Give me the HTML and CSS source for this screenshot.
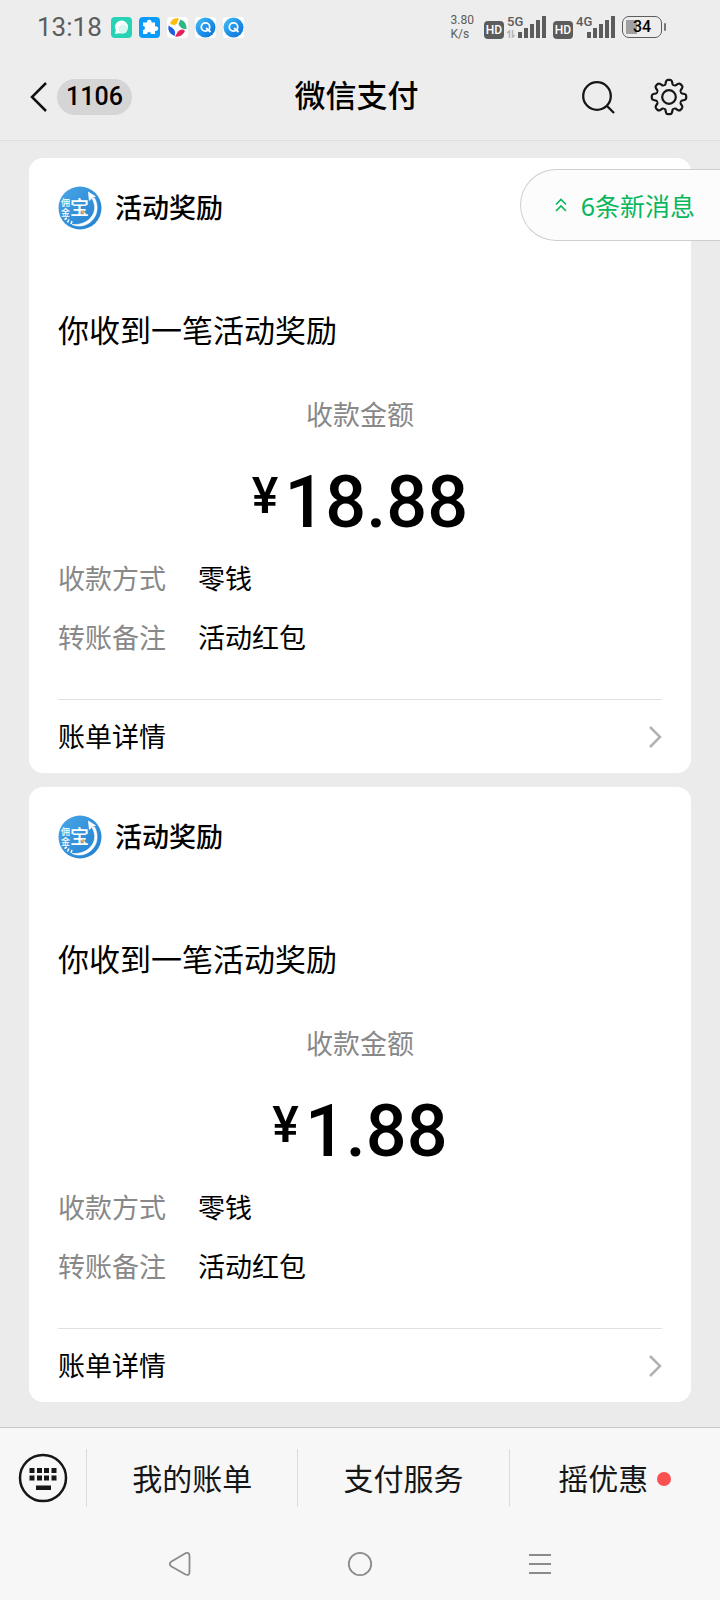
FILE: index.html
```html
<!DOCTYPE html>
<html lang="zh-CN">
<head>
<meta charset="utf-8">
<meta name="viewport" content="width=device-width, initial-scale=1">
<title>微信支付</title>
<link rel="stylesheet" href="styles.css">
</head>
<body>
<svg class="defs" width="0" height="0" aria-hidden="true">
  <defs>
    <linearGradient id="blue" x1="0" y1="0" x2="1" y2="1">
      <stop offset="0" stop-color="#4ba6e6"/><stop offset="1" stop-color="#1f7fd0"/>
    </linearGradient>
    <linearGradient id="browser" x1="0" y1="0" x2="1" y2="1">
      <stop offset="0" stop-color="#4cc3f5"/><stop offset=".5" stop-color="#1f93ea"/><stop offset="1" stop-color="#0b6fd6"/>
    </linearGradient>
    <symbol id="logo" viewBox="0 0 44 44">
      <circle cx="22" cy="22" r="21.500" fill="url(#blue)"/>
      <path d="M36.500 12C40.500 19 40 28 34.500 34C29 40 21 41.500 14 38.500C21 39 28 37 32.500 32C37.500 26.500 38 19.500 34 12.500Z" fill="#fff" stroke="#fff" stroke-width=".6"/>
      <path d="M30 5.500L38 10.500L34.500 12L31 15Z" fill="#fff"/>
      <path d="M6.500 33.500l2.500-1.500M9.500 36.500l1.500-3M13 38l1-3" stroke="#fff" stroke-width="1.500"/>
      <text x="12" y="29" font-size="19" font-weight="500" fill="#fff">宝</text>
      <text x="3" y="20" font-size="9" font-weight="500" fill="#fff">佣</text>
      <text x="3" y="30" font-size="9" font-weight="500" fill="#fff">金</text>
      <circle cx="25" cy="26" r="1.800" fill="#d9b45c"/>
    </symbol>
    <symbol id="bars" viewBox="0 0 28 22">
      <path d="M0 16h4v6H0zM6 12h4v10H6zM12 8h4v14h-4zM18 4h4v18h-4zM24 0h4v22h-4z" fill="#5c5c5c"/>
    </symbol>
    <symbol id="q" viewBox="0 0 21 21">
      <rect width="21" height="21" rx="3" fill="#fff"/>
      <circle cx="10.500" cy="10.500" r="10" fill="url(#browser)"/>
      <circle cx="10.500" cy="10" r="4.200" fill="none" stroke="#fff" stroke-width="1.800"/>
      <path d="M11 11l4.500 4" stroke="#fff" stroke-width="1.800"/>
    </symbol>
    <path id="tooth" d="M-5.050-12.200Q-4-11.800-3.500-13.200L-3-15.500Q-2.600-17.200-1-17.200H1Q2.600-17.200 3-15.500L3.500-13.200Q4-11.800 5.050-12.200"/>
    <symbol id="chevron" viewBox="0 0 14 24"><path d="M2 2l10 10L2 22" fill="none" stroke="#b2b2b2" stroke-width="2.500"/></symbol>
  </defs>
</svg>

<header class="top">
  <div class="status">
    <div class="status-left">
      <span class="clock">13:18</span>
      <svg class="app" viewBox="0 0 21 21" aria-hidden="true"><rect width="21" height="21" rx="4" fill="#27d3b5"/><circle cx="10.500" cy="10" r="6.500" fill="#fff"/><path d="M4 17l1-5 5 4z" fill="#fff"/><circle cx="12" cy="12" r="4.500" fill="#d5f7ee"/></svg>
      <svg class="app" viewBox="0 0 21 21" aria-hidden="true"><rect width="21" height="21" rx="4" fill="#0b9bfb"/><path d="M4 5.500h4a2.300 2.300 0 1 1 4.500 0H16v4a2.300 2.300 0 1 1 0 4.200V17h-4a2 2 0 1 0-4 0H4v-4a2 2 0 1 0 0-4z" fill="#fff"/></svg>
      <svg class="app" viewBox="0 0 21 21" aria-hidden="true"><rect width="21" height="21" rx="4" fill="#fff"/><path d="M3 6Q6 0 12 1.500L9.500 7Q6 9.500 3 6z" fill="#fdbc0b"/><path d="M13.500 2.500Q20 5 19.500 12Q14 13 11.500 7z" fill="#2fb586"/><path d="M18 14Q15 20.500 8 19.500L11 14.500Q15 11 18 14z" fill="#e6205b"/><path d="M1.500 8.500Q0 16 7.500 19Q9.500 14 5.500 11z" fill="#1c60dd"/></svg>
      <svg class="app" aria-hidden="true"><use href="#q"/></svg>
      <svg class="app" aria-hidden="true"><use href="#q"/></svg>
    </div>
    <div class="status-right">
      <span class="speed">3.80<br>K/s</span>
      <span class="hd">HD</span>
      <span class="network"><span class="gen">5G</span><svg class="arrows" viewBox="0 0 8 8" aria-hidden="true"><path d="M2.500 8V1L0 3M5.500 0v7L8 5" fill="none" stroke="#b5b5b5" stroke-width="1.500"/></svg><svg class="bars" aria-hidden="true"><use href="#bars"/></svg></span>
      <span class="hd">HD</span>
      <span class="network"><span class="gen">4G</span><svg class="bars" aria-hidden="true"><use href="#bars"/></svg></span>
      <span class="battery">34</span>
    </div>
  </div>
  <nav class="titlebar">
    <div class="side">
      <button class="back" aria-label="返回"><svg width="18" height="32" viewBox="0 0 18 32"><path d="M17 2L3 16l14 14" fill="none" stroke="#111" stroke-width="2.500"/></svg><span class="count">1106</span></button>
    </div>
    <h1>微信支付</h1>
    <div class="side side-end">
      <button aria-label="搜索"><svg width="36" height="36" viewBox="0 0 36 36" fill="none" stroke="#161616" stroke-width="2.300"><circle cx="17" cy="17" r="13.800"/><path d="M27 27l7 7"/></svg></button>
      <button aria-label="设置"><svg width="38" height="38" viewBox="-19 -19 38 38" fill="none" stroke="#161616" stroke-width="2.200"><circle r="6.800"/><use href="#tooth"/><use href="#tooth" transform="rotate(45)"/><use href="#tooth" transform="rotate(90)"/><use href="#tooth" transform="rotate(135)"/><use href="#tooth" transform="rotate(180)"/><use href="#tooth" transform="rotate(225)"/><use href="#tooth" transform="rotate(270)"/><use href="#tooth" transform="rotate(315)"/></svg></button>
    </div>
  </nav>
</header>

<main class="feed">
  <button class="new-messages"><svg width="12" height="14" viewBox="0 0 12 14" aria-hidden="true"><path d="M1 6.500l5-5 5 5M1 13l5-5 5 5" fill="none" stroke="#07b75b" stroke-width="1.600"/></svg>6条新消息</button>

  <article class="card">
    <div class="source"><svg class="logo" aria-hidden="true"><use href="#logo"/></svg><h2>活动奖励</h2></div>
    <p class="message">你收到一笔活动奖励</p>
    <p class="caption">收款金额</p>
    <p class="amount"><span class="yen">¥</span>18.88</p>
    <dl>
      <dt>收款方式</dt><dd>零钱</dd>
      <dt>转账备注</dt><dd>活动红包</dd>
    </dl>
    <a class="detail" href="#">账单详情<svg width="14" height="24" aria-hidden="true"><use href="#chevron"/></svg></a>
  </article>

  <article class="card">
    <div class="source"><svg class="logo" aria-hidden="true"><use href="#logo"/></svg><h2>活动奖励</h2></div>
    <p class="message">你收到一笔活动奖励</p>
    <p class="caption">收款金额</p>
    <p class="amount"><span class="yen">¥</span>1.88</p>
    <dl>
      <dt>收款方式</dt><dd>零钱</dd>
      <dt>转账备注</dt><dd>活动红包</dd>
    </dl>
    <a class="detail" href="#">账单详情<svg width="14" height="24" aria-hidden="true"><use href="#chevron"/></svg></a>
  </article>
</main>

<footer class="bottom">
  <nav class="menu">
    <button class="keyboard" aria-label="键盘"><svg width="50" height="50" viewBox="0 0 50 50"><circle cx="25" cy="25" r="23" fill="none" stroke="#161616" stroke-width="2.500"/><path d="M11.500 15h5v5h-5zM19 15h5v5h-5zM26 15h5v5h-5zM33.500 15h5v5h-5zM11.500 22.500h5v5h-5zM19 22.500h5v5h-5zM26 22.500h5v5h-5zM33.500 22.500h5v5h-5zM18 32.500h15v4.500H18z" fill="#161616"/></svg></button>
    <button class="item">我的账单</button>
    <button class="item">支付服务</button>
    <button class="item">摇优惠<span class="dot"></span></button>
  </nav>
  <nav class="system">
    <button aria-label="后退"><svg width="24" height="26" viewBox="0 0 24 26"><path d="M17.500 2.200L3.500 10.500Q0 13 3.500 15.500L17.500 23.500Q21.500 25 21.500 21V5Q21.500 1 17.500 2.200z" fill="none" stroke="#8b8b8b" stroke-width="1.800"/></svg></button>
    <button aria-label="主页"><svg width="26" height="26" viewBox="0 0 26 26"><circle cx="13" cy="13" r="11.200" fill="none" stroke="#8b8b8b" stroke-width="1.800"/></svg></button>
    <button aria-label="最近任务"><svg width="22" height="22" viewBox="0 0 22 22"><path d="M0 2h22M0 11h22M0 20h22" stroke="#8b8b8b" stroke-width="2"/></svg></button>
  </nav>
</footer>
</body>
</html>
```
FILE: styles.css
```css
* { box-sizing: border-box; }

body {
  margin: 0;
  min-height: 100vh;
  display: flex;
  flex-direction: column;
  background: #ebebeb;
  color: #000;
  font-family: "Noto Sans", "Noto Sans CJK SC", sans-serif;
  font-size: 27px;
}

h1, h2, p, dl, dd { margin: 0; }

button {
  display: flex;
  align-items: center;
  justify-content: center;
  padding: 0;
  border: 0;
  background: none;
  color: inherit;
  font: inherit;
}

svg { display: block; flex: none; }
.defs { position: absolute; }

/* Header */
.top {
  border-bottom: 1px solid #dedede;
  background: #ededed;
  font-family: Roboto, "Noto Sans CJK SC", sans-serif;
}

.status {
  display: flex;
  justify-content: space-between;
  align-items: center;
  height: 54px;
  padding: 0 58px 0 37px;
  color: #5c5c5c;
}
.status-left { display: flex; align-items: center; gap: 7px; }
.clock { margin-right: 2px; font-size: 26px; line-height: 36px; }
.app { width: 21px; height: 21px; }
.status-right { display: flex; align-items: center; gap: 7px; }
.speed { margin-right: 3px; font-size: 12px; line-height: 14px; }
.hd {
  width: 20px;
  margin-top: 6px;
  border-radius: 4px;
  background: #5c5c5c;
  color: #fff;
  font-size: 12px;
  font-weight: 500;
  line-height: 18px;
  text-align: center;
}
.network {
  display: grid;
  grid-template-columns: 11px 28px;
  align-items: end;
  margin-left: -4px;
}
.gen {
  grid-area: 1 / 1;
  align-self: start;
  font-size: 13px;
  font-weight: 500;
  line-height: 12px;
}
.arrows { grid-area: 1 / 1; width: 8px; height: 8px; }
.bars { grid-area: 1 / 2; width: 28px; height: 22px; }
.battery {
  position: relative;
  width: 40px;
  height: 22px;
  border: 1px solid #5c5c5c;
  border-radius: 7px;
  background: linear-gradient(#a0a0a0, #a0a0a0) 3px 3px / 11px 14px no-repeat;
  color: #000;
  font-size: 16px;
  font-weight: 500;
  line-height: 20px;
  text-align: center;
}
.battery::after {
  content: "";
  position: absolute;
  top: 6px;
  right: -5px;
  width: 2px;
  height: 8px;
  border-radius: 1px;
  background: #777;
}

.titlebar {
  display: flex;
  align-items: center;
  height: 86px;
  padding: 0 32px 0 29px;
}
.side { flex: 1; display: flex; align-items: center; gap: 34px; }
.side-end { justify-content: flex-end; }
.back { gap: 10px; }
.count {
  padding: 0 9px;
  border-radius: 18px;
  background: #d5d5d5;
  font-size: 25px;
  font-weight: 500;
  line-height: 36px;
}
h1 { padding-right: 4px; font-size: 31px; font-weight: 500; line-height: 44px; }

/* Feed */
.feed {
  position: relative;
  flex: 1;
  display: flex;
  flex-direction: column;
  gap: 14px;
  padding: 17px 29px 24px;
}
.new-messages {
  position: absolute;
  top: 28px;
  right: 0;
  gap: 14px;
  height: 72px;
  padding: 0 25px 0 34px;
  border: 1px solid #cecece;
  border-right: 0;
  border-radius: 36px 0 0 36px;
  background: #fcfcfc;
  color: #07b75b;
  font-size: 25px;
}
.card { padding: 28px 29px 0; border-radius: 14px; background: #fff; }
.source { display: flex; align-items: center; gap: 13px; }
.logo { width: 44px; height: 44px; }
h2 { font-size: 27px; font-weight: 500; line-height: 44px; }
.message { margin-top: 78px; font-size: 31px; line-height: 44px; }
.caption { margin-top: 43px; color: #888; line-height: 40px; text-align: center; }
.amount {
  display: flex;
  justify-content: center;
  gap: 6px;
  margin: 28px 0 6px;
  font-family: Roboto, sans-serif;
  font-size: 72px;
  font-weight: 500;
  line-height: 80px;
}
.yen { font-size: 50px; line-height: 66px; }
dl {
  display: grid;
  grid-template-columns: auto 1fr;
  column-gap: 32px;
  padding-bottom: 32px;
  border-bottom: 1px solid #e0e0e0;
  line-height: 59px;
}
dt { color: #888; }
.detail {
  display: flex;
  align-items: center;
  justify-content: space-between;
  color: inherit;
  line-height: 73px;
  text-decoration: none;
}

/* Bottom bars */
.bottom { border-top: 1px solid #c8c8c8; background: #f7f7f7; }
.menu { display: flex; align-items: center; height: 100px; }
.keyboard { width: 86px; }
.item {
  flex: 1;
  gap: 9px;
  height: 58px;
  padding-bottom: 2px;
  border-left: 1px solid #dcdcdc;
  color: #161616;
  font-size: 30px;
}
.dot { width: 14px; height: 14px; margin-top: 4px; border-radius: 50%; background: #fa5151; }
.system {
  display: flex;
  justify-content: space-around;
  align-items: center;
  height: 72px;
  padding: 0 90px;
}
.system button { flex: 1; }
```
